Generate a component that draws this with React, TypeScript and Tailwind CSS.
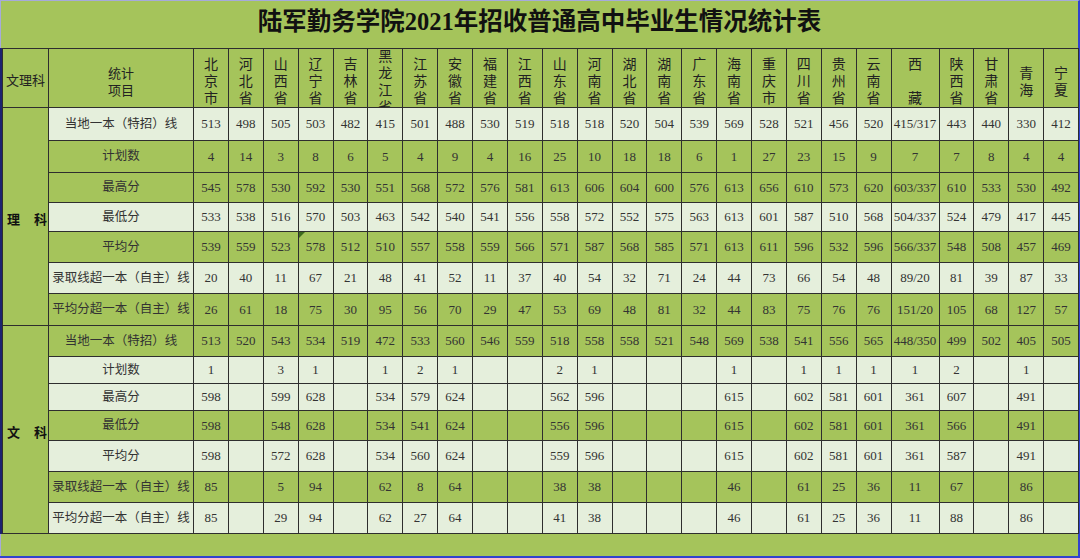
import React from "react";

type Row = {
	label: string;
	light: boolean;
	values: string[];
	h: string;
};

const provinces = [
	"北京市", "河北省", "山西省", "辽宁省", "吉林省", "黑龙江省", "江苏省", "安徽省",
	"福建省", "江西省", "山东省", "河南省", "湖北省", "湖南省", "广东省", "海南省",
	"重庆市", "四川省", "贵州省", "云南省", "西藏", "陕西省", "甘肃省", "青海", "宁夏"
];

const sp = (s: string) => s.split(" ").map((v) => (v === "_" ? "" : v));

const science: Row[] = [
	{ label: "当地一本（特招）线", light: true, h: "h-[33px]", values: sp("513 498 505 503 482 415 501 488 530 519 518 518 520 504 539 569 528 521 456 520 415/317 443 440 330 412") },
	{ label: "计划数", light: false, h: "h-[32px]", values: sp("4 14 3 8 6 5 4 9 4 16 25 10 18 18 6 1 27 23 15 9 7 7 8 4 4") },
	{ label: "最高分", light: false, h: "h-[30px]", values: sp("545 578 530 592 530 551 568 572 576 581 613 606 604 600 576 613 656 610 573 620 603/337 610 533 530 492") },
	{ label: "最低分", light: true, h: "h-[29px]", values: sp("533 538 516 570 503 463 542 540 541 556 558 572 552 575 563 613 601 587 510 568 504/337 524 479 417 445") },
	{ label: "平均分", light: false, h: "h-[31px]", values: sp("539 559 523 578 512 510 557 558 559 566 571 587 568 585 571 613 611 596 532 596 566/337 548 508 457 469") },
	{ label: "录取线超一本（自主）线", light: true, h: "h-[31px]", values: sp("20 40 11 67 21 48 41 52 11 37 40 54 32 71 24 44 73 66 54 48 89/20 81 39 87 33") },
	{ label: "平均分超一本（自主）线", light: false, h: "h-[32px]", values: sp("26 61 18 75 30 95 56 70 29 47 53 69 48 81 32 44 83 75 76 76 151/20 105 68 127 57") }
];

const arts: Row[] = [
	{ label: "当地一本（特招）线", light: false, h: "h-[31px]", values: sp("513 520 543 534 519 472 533 560 546 559 518 558 558 521 548 569 538 541 556 565 448/350 499 502 405 505") },
	{ label: "计划数", light: true, h: "h-[27px]", values: sp("1 _ 3 1 _ 1 2 1 _ _ 2 1 _ _ _ 1 _ 1 1 1 1 2 _ 1 _") },
	{ label: "最高分", light: true, h: "h-[27px]", values: sp("598 _ 599 628 _ 534 579 624 _ _ 562 596 _ _ _ 615 _ 602 581 601 361 607 _ 491 _") },
	{ label: "最低分", light: false, h: "h-[30px]", values: sp("598 _ 548 628 _ 534 541 624 _ _ 556 596 _ _ _ 615 _ 602 581 601 361 566 _ 491 _") },
	{ label: "平均分", light: true, h: "h-[31px]", values: sp("598 _ 572 628 _ 534 560 624 _ _ 559 596 _ _ _ 615 _ 602 581 601 361 587 _ 491 _") },
	{ label: "录取线超一本（自主）线", light: false, h: "h-[31px]", values: sp("85 _ 5 94 _ 62 8 64 _ _ 38 38 _ _ _ 46 _ 61 25 36 11 67 _ 86 _") },
	{ label: "平均分超一本（自主）线", light: true, h: "h-[31px]", values: sp("85 _ 29 94 _ 62 27 64 _ _ 41 38 _ _ _ 46 _ 61 25 36 11 88 _ 86 _") }
];

const cellBorder = "border border-[#2e2e2e]";

const HeaderName: React.FC<{ name: string }> = ({ name }) => {
	const chars = name === "西藏" ? ["西", "\u00a0", "藏"] : name.split("");
	return (
		<div className="flex h-[58px] flex-col items-center justify-center overflow-hidden pt-[7px] text-[14px] leading-[17px] text-[#222]">
			{chars.map((c, i) => (
				<span key={i}>{c}</span>
			))}
		</div>
	);
};

const Section: React.FC<{ rows: Row[]; name: [string, string]; marker?: boolean }> = ({ rows, name, marker }) => (
	<>
		{rows.map((row, r) => (
			<tr key={r} className={`${row.h} ${row.light ? "bg-[#e5efdc]" : "bg-[#a5c45b]"}`}>
				{r === 0 && (
					<td rowSpan={rows.length} className={`${cellBorder} bg-[#a5c45b] p-0`}>
						<div className="flex w-[46px] justify-between pl-[4px] pr-[2px] pt-[6px] text-[13px] font-bold text-[#111]">
							<span>{name[0]}</span>
							<span>{name[1]}</span>
						</div>
					</td>
				)}
				<td className={`${cellBorder} whitespace-nowrap p-0 text-center text-[12.5px] text-[#333]`}>
					{row.label}
				</td>
				{row.values.map((v, i) => (
					<td key={i} className={`${cellBorder} relative whitespace-nowrap p-0 text-center text-[13px] text-[#333]`}>
						{marker && r === 4 && i === 3 && (
							<span className="absolute left-0 top-0 h-0 w-0 border-r-[6px] border-t-[6px] border-r-transparent border-t-[#3d6b1e]" />
						)}
						{v}
					</td>
				))}
			</tr>
		))}
	</>
);

export default function App() {
	return (
		<div className="flex h-[558px] w-[1080px] flex-col border-r-2 border-b-2 border-t border-r-[#3142cf] border-b-[#3142cf] border-t-[#a6aadb] bg-[#a5c45b] font-['Liberation_Serif','Noto_Sans_CJK_SC',serif]">
			<div className="flex h-[47px] shrink-0 items-center justify-center border-l border-[#a6aadb]">
				<h1 className="pb-[4px] text-[24.5px] font-bold text-[#111]">
					陆军勤务学院2021年招收普通高中毕业生情况统计表
				</h1>
			</div>
			<div className="border-l-2 border-[#1c2270]">
				<table className="w-[1076px] table-fixed border-collapse">
					<colgroup>
						<col className="w-[46px]" />
						<col className="w-[145px]" />
						{provinces.map((p) => (
							<col key={p} className={p === "西藏" ? "w-[48px]" : "w-[34.875px]"} />
						))}
					</colgroup>
					<thead>
						<tr className="h-[59px] bg-[#a5c45b]">
							<th className={`${cellBorder} p-0 pt-[6px] text-[13px] font-normal text-[#222]`}>文理科</th>
							<th className={`${cellBorder} p-0 pt-[7px] text-[13px] font-normal leading-[17px] text-[#222]`}>
								统计
								<br />
								项目
							</th>
							{provinces.map((p) => (
								<th key={p} className={`${cellBorder} p-0 font-normal`}>
									<HeaderName name={p} />
								</th>
							))}
						</tr>
					</thead>
					<tbody>
						<Section rows={science} name={["理", "科"]} marker />
						<Section rows={arts} name={["文", "科"]} />
					</tbody>
				</table>
			</div>
			<div className="flex-1 border-l border-[#a6aadb]" />
		</div>
	);
}
